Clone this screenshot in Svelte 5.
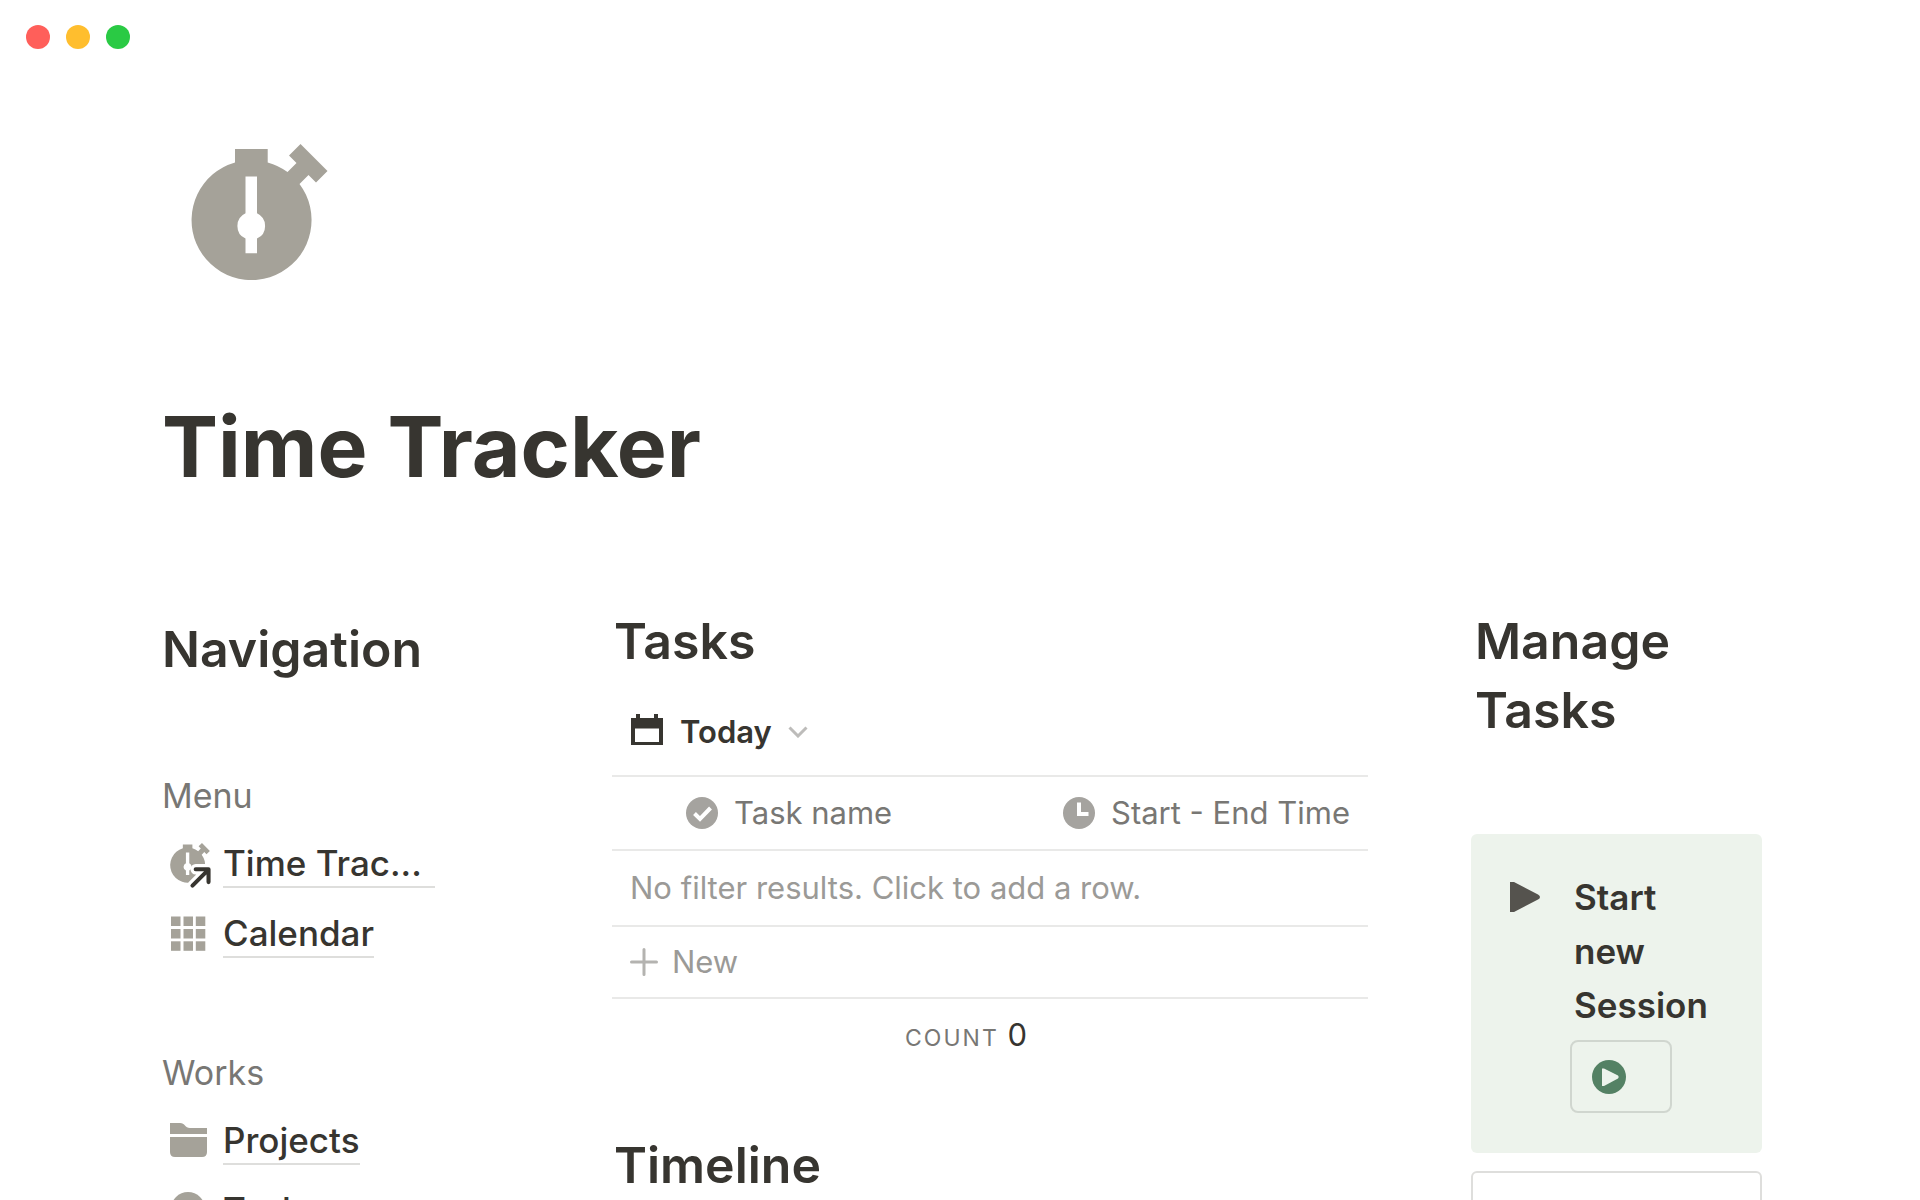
<script>
	const lights = ['red', 'yellow', 'green']

	const sections = [
		{
			title: 'Menu',
			links: [
				{ label: 'Time Trac...', icon: 'stopwatch', wide: true },
				{ label: 'Calendar', icon: 'grid' }
			]
		},
		{
			title: 'Works',
			links: [
				{ label: 'Projects', icon: 'folder' },
				{ label: 'Tasks', icon: 'check' }
			]
		}
	]

	let rows = $state(0)
</script>

{#snippet stopwatch()}
	<path
		fill-rule="evenodd"
		d="M235 149H267.7V162.4A60 60 0 0 1 287.5 172L296.5 163L289 155.5L300.5 144L327.5 171L316 182.5L308.5 175L299.5 184A60 60 0 1 1 235 162.4ZM245.5 176.5V213.2A14 14 0 0 0 245.5 238.6V253.3H257V238.6A14 14 0 0 0 257 213.2V176.5Z"
	/>
{/snippet}

<div class="window">
	<header class="titlebar">
		{#each lights as light}
			<span class="light {light}"></span>
		{/each}
	</header>

	<main>
		<svg class="page-icon" viewBox="191 144 137 137" aria-hidden="true">
			{@render stopwatch()}
		</svg>
		<h1>Time Tracker</h1>

		<div class="columns">
			<nav>
				<h2>Navigation</h2>
				{#each sections as section}
					<section>
						<h3>{section.title}</h3>
						<ul>
							{#each section.links as link}
								<li>
									{#if link.icon === 'stopwatch'}
										<svg class="nav-icon" viewBox="191 144 137 137" aria-hidden="true">
											{@render stopwatch()}
											<g fill="none" stroke-linecap="round" stroke-linejoin="round">
												<path stroke="#fff" stroke-width="36" d="M268 290L322 236M279 234H323V278" />
												<path stroke="#373530" stroke-width="14" d="M268 290L322 236M279 234H323V278" />
											</g>
										</svg>
									{:else if link.icon === 'grid'}
										<svg class="nav-icon" viewBox="0 0 40 40" aria-hidden="true">
											{#each [3.5, 16, 28.3] as y}
												{#each [1, 13.5, 25.8] as x}
													<rect {x} {y} width="9.5" height="9.5" />
												{/each}
											{/each}
										</svg>
									{:else if link.icon === 'folder'}
										<svg class="nav-icon" viewBox="0 0 40 40" aria-hidden="true">
											<path d="M0 3H10C15 3 15 8 20 8H37V14H0Z" />
											<path d="M0 17H37V32Q37 37 32 37H5Q0 37 0 32Z" />
										</svg>
									{:else}
										<svg class="nav-icon" viewBox="0 0 40 40" aria-hidden="true">
											<circle cx="18" cy="19" r="17" />
											<path fill="none" stroke="#fff" stroke-width="4" d="M10 20L16 26L27 14" />
										</svg>
									{/if}
									<a href="#{link.icon}" class:wide={link.wide}>{link.label}</a>
								</li>
							{/each}
						</ul>
					</section>
				{/each}
			</nav>

			<div class="tasks">
				<h2>Tasks</h2>
				<button class="view">
					<svg width="34" height="36" viewBox="0 0 34 36" aria-hidden="true">
						<path
							fill="#373530"
							fill-rule="evenodd"
							d="M1 4H6V0H10V4H24V0H28V4H33V31H1ZM5 14.500V28H29V14.500Z"
						/>
					</svg>
					<span>Today</span>
					<svg class="chevron" width="20" height="12" viewBox="0 0 20 12" aria-hidden="true">
						<path fill="none" stroke="#bdbcba" stroke-width="3" d="M1.500 1.500L10 10L18.500 1.500" />
					</svg>
				</button>

				<table>
					<thead>
						<tr>
							<th class="name">
								<div class="head">
									<svg width="32" height="32" viewBox="0 0 32 32" aria-hidden="true">
										<circle cx="16" cy="16" r="16" fill="#a5a39f" />
										<path fill="none" stroke="#fff" stroke-width="4" d="M8.500 16.500L14 22L24.500 11" />
									</svg>
									Task name
								</div>
							</th>
							<th>
								<div class="head">
									<svg width="32" height="32" viewBox="0 0 32 32" aria-hidden="true">
										<circle cx="16" cy="16" r="16" fill="#a5a39f" />
										<path fill="none" stroke="#fff" stroke-width="4" d="M16 5.500V17H25.500" />
									</svg>
									Start - End Time
								</div>
							</th>
						</tr>
					</thead>
					<tbody>
						<tr class="empty">
							<td colspan="2">No filter results. Click to add a row.</td>
						</tr>
						<tr class="new">
							<td colspan="2">
								<button onclick={() => rows++}>
									<svg width="28" height="28" viewBox="0 0 28 28" aria-hidden="true">
										<path stroke="#b4b3b0" stroke-width="3" stroke-linecap="round" d="M14 1.500V26.500M1.500 14H26.500" />
									</svg>
									New
								</button>
							</td>
						</tr>
					</tbody>
					<tfoot>
						<tr>
							<td class="count"><span>COUNT</span> {rows}</td>
							<td></td>
						</tr>
					</tfoot>
				</table>

				<h2 class="timeline">Timeline</h2>
			</div>

			<aside>
				<h2>Manage Tasks</h2>
				<div class="card">
					<svg class="play" width="30" height="30" viewBox="0 0 30 30" aria-hidden="true">
						<path fill="#55534e" d="M0 0H4L28 12.500Q30 13.500 30 15T28 17.500L4 30H0Z" />
					</svg>
					<div class="card-body">
						<p>Start new Session</p>
						<button class="start" aria-label="Start new session">
							<svg width="34" height="34" viewBox="0 0 34 34" aria-hidden="true">
								<circle cx="17" cy="17" r="17" fill="#548164" />
								<path fill="#edf3ec" d="M10 8.500H12L26 15.500Q27.500 17 26 18.500L12 26H10Z" />
							</svg>
						</button>
					</div>
				</div>
				<div class="card outlined"></div>
			</aside>
		</div>
	</main>
</div>

<style>
	:global(body) {
		margin: 0;
		background: #fff;
	}

	.window {
		height: 100vh;
		overflow: hidden;
		color: #373530;
		font-family: Inter, sans-serif;
		font-size: 31px;
		line-height: 40px;
	}

	.titlebar {
		display: flex;
		gap: 16px;
		padding: 25px 26px;
	}

	.light {
		width: 24px;
		height: 24px;
		border-radius: 50%;
	}

	.red {
		background: #ff5f5a;
	}

	.yellow {
		background: #ffbe2e;
	}

	.green {
		background: #2aca44;
	}

	main {
		padding: 70px 158px 0 162px;
	}

	.page-icon {
		display: block;
		width: 137px;
		height: 137px;
		margin-left: 29px;
		fill: #a5a299;
	}

	h1,
	h2,
	h3,
	p,
	ul {
		margin: 0;
		padding: 0;
		font-weight: inherit;
	}

	h1 {
		margin-top: 108px;
		font-size: 84px;
		font-weight: 700;
		line-height: 116px;
	}

	h2 {
		font-size: 50px;
		font-weight: 600;
		line-height: 69px;
	}

	h3 {
		color: #787774;
		font-size: 34px;
		line-height: 54px;
	}

	.columns {
		display: grid;
		grid-template-columns: 347fr 756fr 291fr;
		gap: 103px;
		margin-top: 102px;
	}

	nav {
		padding: 8px 74px 0 0;
	}

	section {
		margin-bottom: 78px;
	}

	h2 + section {
		margin-top: 85px;
	}

	ul {
		margin-top: 5px;
		list-style: none;
	}

	li {
		display: flex;
		align-items: center;
		gap: 13px;
		height: 70px;
		padding-left: 8px;
	}

	.nav-icon {
		flex: none;
		width: 40px;
		height: 40px;
		overflow: visible;
		fill: #a5a299;
	}

	a {
		padding: 3px 0 1px;
		border-bottom: 2px solid #dededc;
		color: inherit;
		font-size: 35px;
		font-weight: 500;
		line-height: 44px;
		text-decoration: none;
		white-space: nowrap;
	}

	.wide {
		flex: 1;
	}

	.tasks h2 {
		padding-left: 2px;
	}

	aside h2 {
		padding-left: 4px;
	}

	button {
		border: 0;
		background: none;
		color: inherit;
		font: inherit;
		cursor: pointer;
	}

	.view {
		display: flex;
		align-items: center;
		gap: 16px;
		margin: 36px 0 23px;
		padding: 0 18px;
		font-weight: 600;
	}

	table {
		width: 100%;
		border-collapse: separate;
		border-spacing: 0;
		border-top: 2px solid #e9e9e8;
	}

	th,
	td {
		box-sizing: border-box;
		height: 74px;
		padding: 0 18px;
		text-align: left;
	}

	th,
	tbody td {
		border-bottom: 2px solid #e9e9e8;
	}

	th {
		color: #787774;
		font-weight: 400;
		white-space: nowrap;
	}

	.name {
		width: 58%;
		padding-left: 74px;
	}

	.head,
	.new button {
		display: flex;
		align-items: center;
		gap: 16px;
	}

	.empty,
	.new {
		color: #9b9a97;
	}

	.empty td {
		height: 76px;
	}

	.new td {
		height: 72px;
	}

	.new button {
		gap: 14px;
		padding: 0;
	}

	.count {
		text-align: right;
	}

	.count span {
		color: #787774;
		font-size: 23px;
		letter-spacing: 2px;
	}

	.timeline {
		margin-top: 58px;
	}

	.card {
		display: flex;
		gap: 30px;
		margin-top: 89px;
		padding: 36px 39px 40px;
		border-radius: 6px;
		background: #edf3ec;
	}

	.play {
		flex: none;
		margin-top: 12px;
	}

	.card p {
		padding-left: 4px;
		font-size: 35px;
		font-weight: 600;
		line-height: 54px;
	}

	.start {
		display: flex;
		align-items: center;
		box-sizing: border-box;
		width: 102px;
		height: 73px;
		margin-top: 8px;
		padding: 0 20px;
		border: 2px solid #d0d6cf;
		border-radius: 8px;
	}

	.outlined {
		min-height: 200px;
		margin-top: 18px;
		border: 2px solid #dededc;
		background: none;
	}
</style>
